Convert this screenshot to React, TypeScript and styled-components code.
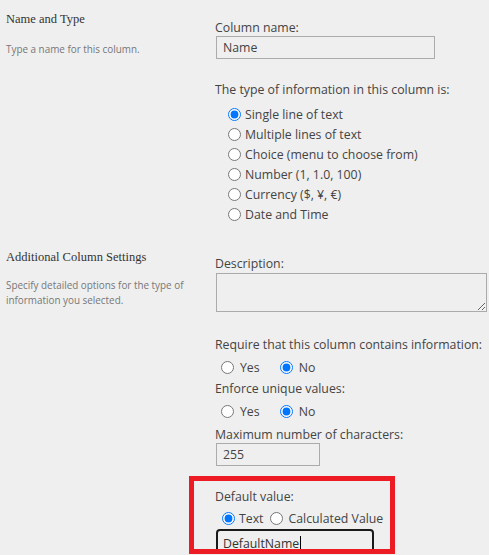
import styled, { createGlobalStyle } from "styled-components";

const GlobalStyle = createGlobalStyle`
  html, body {
    margin: 0;
    padding: 0;
    background: #efefef;
  }
  body {
    font-family: "Open Sans", "Noto Sans", sans-serif;
    color: #444;
  }
`;

const TYPES = [
  "Single line of text",
  "Multiple lines of text",
  "Choice (menu to choose from)",
  "Number (1, 1.0, 100)",
  "Currency ($, ¥, €)",
  "Date and Time",
];

const App = () => {
  return (
    <>
      <GlobalStyle />
      <Page>
        <Section>
          <Side $top={11}>
            <SideTitle>Name and Type</SideTitle>
            <SideText $gap={15}>Type a name for this column.</SideText>
          </Side>
          <Main $top={20}>
            <Label>Column name:</Label>
            <TextInput $width={219} defaultValue="Name" />
            <Label $gap={23}>The type of information in this column is:</Label>
            <TypeList>
              {TYPES.map((type, i) => (
                <RadioRow key={type}>
                  <Radio type="radio" name="type" defaultChecked={i === 0} />
                  <span>{type}</span>
                </RadioRow>
              ))}
            </TypeList>
          </Main>
        </Section>

        <Section>
          <Side $top={25}>
            <SideTitle>Additional Column Settings</SideTitle>
            <SideText $gap={13}>
              Specify detailed options for the type of information you
              selected.
            </SideText>
          </Side>
          <Main $top={32}>
            <Label>Description:</Label>
            <Description />

            <Label $gap={25}>Require that this column contains information:</Label>
            <ChoiceRow>
              <Choice>
                <Radio type="radio" name="required" />
                <span>Yes</span>
              </Choice>
              <Choice>
                <Radio type="radio" name="required" defaultChecked />
                <span>No</span>
              </Choice>
            </ChoiceRow>

            <Label $gap={4}>Enforce unique values:</Label>
            <ChoiceRow>
              <Choice>
                <Radio type="radio" name="unique" />
                <span>Yes</span>
              </Choice>
              <Choice>
                <Radio type="radio" name="unique" defaultChecked />
                <span>No</span>
              </Choice>
            </ChoiceRow>

            <Label $gap={6}>Maximum number of characters:</Label>
            <TextInput $width={104} defaultValue="255" />

            <Highlight>
              <Label>Default value:</Label>
              <DefaultRow>
                <Choice $space={4}>
                  <Radio type="radio" name="default" defaultChecked />
                  <span>Text</span>
                </Choice>
                <Choice>
                  <Radio type="radio" name="default" />
                  <span>Calculated Value</span>
                </Choice>
              </DefaultRow>
              <FocusedInput>
                DefaultName
                <Caret />
              </FocusedInput>
            </Highlight>
          </Main>
        </Section>
      </Page>
    </>
  );
};

export default App;

const Page = styled.div`
  width: 489px;
  height: 555px;
  overflow: hidden;
`;

const Section = styled.div`
  display: grid;
  grid-template-columns: 215px 1fr;
`;

const Side = styled.div<{ $top: number }>`
  padding: ${({ $top }) => $top}px 14px 0 6px;
`;

const SideTitle = styled.div`
  font-family: "Liberation Serif", "Times New Roman", serif;
  font-size: 12.5px;
  line-height: 16px;
  color: #333;
`;

const SideText = styled.div<{ $gap: number }>`
  margin-top: ${({ $gap }) => $gap}px;
  font-size: 9.9px;
  line-height: 15px;
  color: #777;
`;

const Main = styled.div<{ $top: number }>`
  padding-top: ${({ $top }) => $top}px;
  display: flex;
  flex-direction: column;
  align-items: flex-start;
`;

const Label = styled.div<{ $gap?: number }>`
  margin-top: ${({ $gap }) => $gap ?? 0}px;
  font-size: 12.3px;
  line-height: 16px;
  color: #444;
`;

const TextInput = styled.input<{ $width: number }>`
  box-sizing: border-box;
  width: ${({ $width }) => $width}px;
  height: 23px;
  margin: 0 0 0 1px;
  padding: 0 6px;
  border: 1px solid #ababab;
  background: transparent;
  font-family: "Open Sans", "Noto Sans", sans-serif;
  font-size: 12.3px;
  color: #444;
  outline: none;
`;

const Description = styled.textarea`
  box-sizing: border-box;
  width: 271px;
  height: 39px;
  margin: 1px 0 0 1px;
  padding: 2px 6px;
  border: 1px solid #ababab;
  background: transparent;
  font-family: "Open Sans", "Noto Sans", sans-serif;
  font-size: 12.3px;
  outline: none;
`;

const TypeList = styled.div`
  margin-top: 6px;
  padding-left: 13px;
  display: flex;
  flex-direction: column;
`;

const RadioRow = styled.label`
  display: flex;
  align-items: center;
  gap: 4px;
  height: 20px;
  font-size: 12.3px;
  color: #444;
`;

const Radio = styled.input`
  width: 13px;
  height: 13px;
  margin: 0;
  accent-color: #0075ff;
`;

const ChoiceRow = styled.div`
  margin-top: 4px;
  padding-left: 6px;
  display: flex;
  height: 20px;
  gap: 20px;
`;

const Choice = styled.label<{ $space?: number }>`
  display: flex;
  align-items: center;
  gap: ${({ $space }) => $space ?? 6}px;
  font-size: 12.3px;
  color: #444;
`;

const Highlight = styled.div`
  box-sizing: border-box;
  width: 206px;
  height: 78px;
  margin: 10px 0 0 -26px;
  padding: 8px 0 0 21px;
  border: 5px solid #ed1c24;
  border-bottom: none;
  overflow: hidden;
  position: relative;

  &::after {
    content: "";
    position: absolute;
    left: 0;
    right: 0;
    bottom: 0;
    height: 5px;
    background: #ed1c24;
  }
`;

const DefaultRow = styled.div`
  margin-top: 3px;
  padding-left: 7px;
  display: flex;
  height: 20px;
  gap: 6px;
`;

const FocusedInput = styled.div`
  box-sizing: border-box;
  width: 158px;
  height: 26px;
  margin: 1px 0 0 1px;
  padding: 3px 5px 0;
  border: 2px solid #1a1a1a;
  border-radius: 4px;
  display: flex;
  align-items: center;
  font-size: 12.3px;
  color: #333;
`;

const Caret = styled.span`
  width: 1px;
  height: 15px;
  margin-left: 1px;
  background: #000;
`;
